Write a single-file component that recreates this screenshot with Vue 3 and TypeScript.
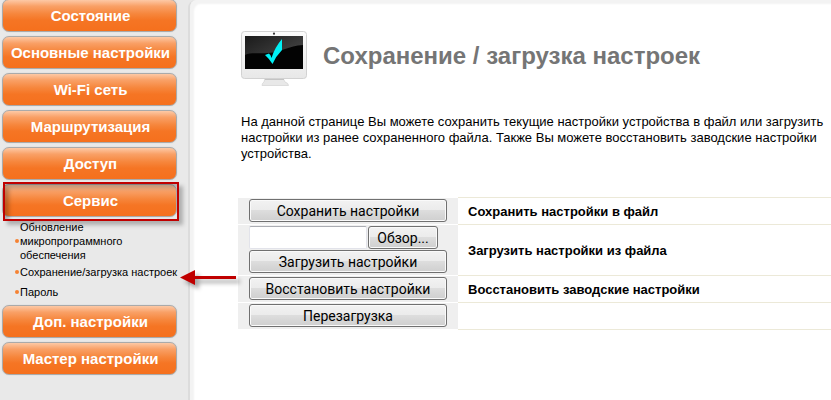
<script setup lang="ts">
import { ref } from 'vue'

interface SubItem {
  label: string
  current?: boolean
}

interface MenuItem {
  label: string
  marked?: boolean
  children?: SubItem[]
}

const menu: MenuItem[] = [
  { label: 'Состояние' },
  { label: 'Основные настройки' },
  { label: 'Wi-Fi сеть' },
  { label: 'Маршрутизация' },
  { label: 'Доступ' },
  {
    label: 'Сервис',
    marked: true,
    children: [
      { label: 'Обновление микропрограммного обеспечения' },
      { label: 'Сохранение/загрузка настроек', current: true },
      { label: 'Пароль' },
    ],
  },
  { label: 'Доп. настройки' },
  { label: 'Мастер настройки' },
]

const fileName = ref('')
</script>

<template>
  <div class="page">
    <nav class="sidebar">
      <ul class="menu">
        <li v-for="item in menu" :key="item.label">
          <div class="slot">
            <a href="#" class="menu-link">{{ item.label }}</a>
            <span v-if="item.marked" class="frame"></span>
          </div>
          <ul v-if="item.children" class="submenu">
            <li v-for="child in item.children" :key="child.label" class="sub-item">
              <span class="dot"></span>
              <a href="#" class="sub-link">{{ child.label }}</a>
              <svg v-if="child.current" class="arrow" width="66" height="24" viewBox="0 0 66 24" aria-hidden="true">
                <path d="M1 9.500 16 2V8H57V11H16V17Z" fill="#c00000" />
              </svg>
            </li>
          </ul>
        </li>
      </ul>
    </nav>

    <main class="content">
      <header class="title">
        <svg class="monitor" width="68" height="58" viewBox="0 0 68 58" aria-hidden="true">
          <defs>
            <linearGradient id="case" x1="0" y1="0" x2="0" y2="1">
              <stop offset="0" stop-color="#fcfcfc" />
              <stop offset="1" stop-color="#e8e8e8" />
            </linearGradient>
            <linearGradient id="gloss" x1="0" y1="0" x2="1" y2="0.6">
              <stop offset="0" stop-color="#222" />
              <stop offset="1" stop-color="#555" />
            </linearGradient>
          </defs>
          <path d="M25 49H43L45 53Q48.500 54 48.500 56.500H22Q22 54 24 53Z" fill="#e8e8e8" stroke="#cfcfcf" stroke-width=".6" />
          <path d="M25 50.500H44" stroke="#c4c4c4" />
          <rect x="1.500" y="2.500" width="65" height="47" rx="3" fill="url(#case)" stroke="#d2d2d2" />
          <circle cx="34" cy="4.700" r="1.100" fill="#333" />
          <rect x="5" y="7" width="58" height="33" fill="#030303" />
          <path d="M5 7H63V16C48 17 42 23 28 24C18 25 11 23 5 26Z" fill="url(#gloss)" opacity=".75" />
          <path d="M25 26 29 24.500Q31 26 31.500 29Q35 18 42 10V21Q36 27 32.500 35Q29 29.500 25 26Z" fill="#00f0f5" />
        </svg>
        <h1>Сохранение / загрузка настроек</h1>
      </header>

      <p class="intro">
        На данной странице Вы можете сохранить текущие настройки устройства в файл или загрузить настройки из ранее
        сохраненного файла. Также Вы можете восстановить заводские настройки устройства.
      </p>

      <table class="actions">
        <tbody>
          <tr>
            <td><button id="save" type="button" class="btn">Сохранить настройки</button></td>
            <th scope="row"><label for="save">Сохранить настройки в файл</label></th>
          </tr>
          <tr>
            <td>
              <div class="picker">
                <input id="file" v-model="fileName" type="text" class="path" />
                <button type="button" class="btn browse">Обзор...</button>
              </div>
              <button type="button" class="btn">Загрузить настройки</button>
            </td>
            <th scope="row"><label for="file">Загрузить настройки из файла</label></th>
          </tr>
          <tr>
            <td><button id="restore" type="button" class="btn">Восстановить настройки</button></td>
            <th scope="row"><label for="restore">Восстановить заводские настройки</label></th>
          </tr>
          <tr>
            <td><button type="button" class="btn">Перезагрузка</button></td>
            <th></th>
          </tr>
        </tbody>
      </table>
    </main>
  </div>
</template>

<style>
body {
  margin: 0;
  background: #e9e9e9;
}
</style>

<style scoped>
.page {
  display: flex;
  min-height: 100vh;
  overflow: hidden;
  font-family: "Liberation Sans", Arial, sans-serif;
  font-size: 13px;
  color: #000;
}

ul {
  list-style: none;
  margin: 0;
  padding: 0;
}

.sidebar {
  flex: none;
  box-sizing: border-box;
  width: 188px;
  padding-left: 2px;
  background: #e9e9e9;
}

.menu {
  display: flex;
  flex-direction: column;
  gap: 4px;
  width: 175px;
  margin-top: -1px;
}

.slot {
  position: relative;
}

.menu-link {
  display: block;
  box-sizing: border-box;
  height: 33px;
  padding-left: 2px;
  border: 1px solid #aaa;
  border-radius: 7px;
  background: linear-gradient(#fdc9a6 0%, #f9a066 20%, #f6863c 45%, #f57524 65%, #f5701d 100%);
  box-shadow: 0 0 1px #bbb;
  color: #fff;
  font-size: 15px;
  font-weight: bold;
  line-height: 32px;
  text-align: center;
  text-decoration: none;
}

.frame {
  position: absolute;
  inset: -2px -2px -4px 1px;
  border: 2px solid #c00000;
  box-shadow: 4px 4px 4px rgba(0, 0, 0, 0.25), inset 4px 4px 4px rgba(0, 0, 0, 0.25);
  pointer-events: none;
}

.submenu {
  margin: 0 -8px -1px 0;
  padding: 3px 0 0 13px;
}

.sub-item {
  position: relative;
  display: flex;
  align-items: center;
  min-height: 20px;
}

.dot {
  flex: none;
  width: 4px;
  height: 4px;
  margin-right: 1px;
  border-radius: 50%;
  background: #f58233;
}

.sub-link {
  color: #000;
  font-size: 11px;
  line-height: 14px;
  text-decoration: none;
}

.arrow {
  position: absolute;
  top: 6px;
  left: 164px;
  filter: drop-shadow(4px 4px 2px rgba(0, 0, 0, 0.35));
}

.content {
  flex: 1;
  min-width: 0;
  padding: 29px 0 0 48px;
  border-left: 2px solid #dcdcdc;
  border-top-left-radius: 8px;
  background: #fff;
  box-shadow: inset 4px 4px 2px #f3f3f3;
}

.title {
  display: flex;
  align-items: center;
  gap: 15px;
  padding-left: 2px;
}

.monitor {
  flex: none;
}

h1 {
  margin: 0;
  color: #757575;
  font-size: 24px;
  line-height: 30px;
  padding-bottom: 4px;
}

.intro {
  margin: 27px 0 35px 3px;
  line-height: 16px;
}

.actions {
  width: 100%;
  border-collapse: collapse;
}

.actions td {
  width: 198px;
  padding: 1px 11px 2px;
  border-top: 1px solid #fff;
  background: #efefef;
}

.actions th {
  padding: 0 10px;
  border-top: 1px solid #ece9d8;
  border-bottom: 1px solid #ece9d8;
  text-align: left;
}

.btn {
  display: block;
  box-sizing: border-box;
  width: 100%;
  height: 23px;
  padding: 0;
  border: 1px solid #707070;
  border-radius: 3px;
  background: linear-gradient(#f2f2f2 0%, #ebebeb 50%, #dddddd 50%, #cfcfcf 100%);
  box-shadow: inset 0 0 0 1px #fafafa;
  color: #000;
  font-family: Roboto, "Liberation Sans", Arial, sans-serif;
  font-size: 14px;
  line-height: 20px;
}

.picker {
  display: flex;
  gap: 1px;
  margin-bottom: 1px;
}

.path {
  box-sizing: border-box;
  width: 118px;
  height: 23px;
  border: 1px solid #e2e3ea;
  border-top-color: #abadb3;
  border-radius: 2px;
  background: #fff;
}

.browse {
  width: 70px;
}
</style>
